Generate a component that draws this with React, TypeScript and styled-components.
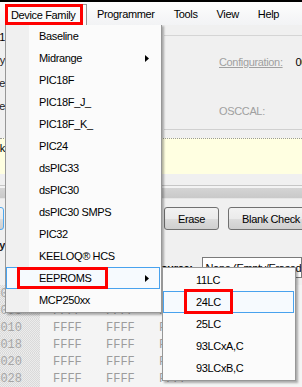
import React from "react";
import styled, { createGlobalStyle } from "styled-components";

const Global = createGlobalStyle`
  html, body { margin: 0; padding: 0; background: #f0f0f0; }
  body { font-family: "Liberation Sans", Arial, sans-serif; }
`;

const Screen = styled.div`
  position: relative;
  width: 302px;
  height: 387px;
  overflow: hidden;
  background: #f0f0f0;
  font-family: "Liberation Sans", Arial, sans-serif;
  font-size: 11px;
  letter-spacing: -0.35px;
  color: #000;
`;

const TopEdge = styled.div`
  height: 2px;
  background: #000;
`;

const MenuBar = styled.div`
  position: relative;
  z-index: 3;
  display: flex;
  align-items: stretch;
  height: 23px;
  padding-left: 5px;
  background: linear-gradient(#fdfdfd, #f2f3f5);
`;

const MenuHeader = styled.div<{ $open?: boolean }>`
  position: relative;
  display: flex;
  align-items: center;
  white-space: nowrap;
  box-sizing: border-box;
  ${(p) =>
    p.$open
      ? `
    margin-top: 2px;
    width: 82px;
    padding-left: 5px;
    border: 1px solid #979797;
    border-bottom: none;
    background: #fbfbfb;
  `
      : `
    padding: 0 9px 0 10px;
  `}
`;

const Annotation = styled.span<{ $l: number; $t: number; $w: number; $h: number }>`
  position: absolute;
  left: ${(p) => p.$l}px;
  top: ${(p) => p.$t}px;
  width: ${(p) => p.$w}px;
  height: ${(p) => p.$h}px;
  box-sizing: border-box;
  border: 3px solid #ff0000;
  pointer-events: none;
`;

const Dropdown = styled.div`
  position: absolute;
  z-index: 2;
  left: 5px;
  top: 24px;
  width: 157px;
  box-sizing: border-box;
  border: 1px solid #979797;
  padding-bottom: 1px;
  background: linear-gradient(to right, #f0f0f0 0 23px, #fbfbfb 23px);
  box-shadow: 2px 2px 2px rgba(0, 0, 0, 0.3);
`;

const SubMenu = styled.div`
  position: absolute;
  z-index: 4;
  left: 162px;
  top: 267px;
  width: 134px;
  box-sizing: border-box;
  border: 1px solid #979797;
  padding: 1px 0;
  background: #fbfbfb;
  box-shadow: 2px 2px 2px rgba(0, 0, 0, 0.3);
`;

const MenuItem = styled.div<{ $hot?: boolean }>`
  position: relative;
  display: flex;
  align-items: center;
  justify-content: space-between;
  height: 22px;
  box-sizing: border-box;
  margin-right: 1px;
  padding: 0 10px 0 32px;
  border: 1px solid ${(p) => (p.$hot ? "#48a2ee" : "transparent")};
  background: ${(p) => (p.$hot ? "#f6fafe" : "transparent")};
  white-space: nowrap;
`;

const Arrow = () => (
  <svg width="4" height="7" viewBox="0 0 4 7">
    <polygon points="0,0 4,3.5 0,7" fill="#000" />
  </svg>
);

const Band = styled.div<{ $mid: number }>`
  display: grid;
  grid-template-columns: 5px ${(p) => p.$mid}px 1fr;
`;

const EdgeStack = styled.div`
  display: grid;
  grid-auto-rows: 23px;
`;

const EdgeText = styled.div<{ $bold?: boolean; $tone?: string }>`
  display: flex;
  justify-content: flex-end;
  align-items: center;
  overflow: hidden;
  white-space: nowrap;
  font-weight: ${(p) => (p.$bold ? 700 : 400)};
  color: ${(p) => p.$tone || "#1a1a1a"};
`;

const InfoBand = styled(Band)`
  height: 105px;
`;

const ConfigGroup = styled.div`
  margin-top: 10px;
  border-top: 1px solid #d5d5d5;
  border-bottom: 1px solid #d0d0d0;
  padding: 19px 0 0 55px;
  display: grid;
  grid-template-rows: 14px 14px;
  row-gap: 35px;
`;

const ConfigRow = styled.div`
  display: flex;
  align-items: center;
  white-space: nowrap;
`;

const Disabled = styled.span<{ $link?: boolean }>`
  color: #a0a0a0;
  text-decoration: ${(p) => (p.$link ? "underline" : "none")};
`;

const Value = styled.span`
  margin-left: 13px;
  color: #000;
`;

const StatusBox = styled(Band)`
  margin-top: 8px;
  height: 36px;
  box-sizing: border-box;
  border-top: 1px dotted #9a9a9a;
  background: #ffffe1;
  align-items: start;
`;

const StatusEdge = styled(EdgeText)`
  height: 14px;
  margin-top: 2px;
`;

const Progress = styled.div`
  margin-top: 11px;
  height: 14px;
  box-sizing: border-box;
  border-top: 1px solid #c6c6c6;
  border-bottom: 1px solid #e6e6e6;
  background: linear-gradient(#f3f3f3 0 2px, #d4d4d4 2px, #c9c9c9);
`;

const ButtonBand = styled(Band)`
  margin-top: 8px;
  height: 23px;
`;

const ButtonGroup = styled.div`
  display: flex;
  gap: 9px;
`;

const Button = styled.button<{ $w: number; $focus?: boolean }>`
  flex: none;
  width: ${(p) => p.$w}px;
  height: 23px;
  box-sizing: border-box;
  padding: 0;
  border: 1px solid ${(p) => (p.$focus ? "#4ea8ef" : "#707070")};
  border-radius: 3px;
  background: linear-gradient(#f2f2f2 0%, #ebebeb 50%, #dddddd 50%, #cfcfcf 100%);
  font-family: inherit;
  font-size: 11px;
  letter-spacing: -0.35px;
  color: #000;
  white-space: nowrap;
`;

const EdgeButtonCell = styled.div`
  display: flex;
  justify-content: flex-end;
  overflow: hidden;
  padding-right: 1px;
`;

const MemoryHeader = styled(Band)`
  margin-top: 8px;
  height: 14px;
`;

const SourceBand = styled(Band)`
  margin-top: 5px;
  height: 21px;
`;

const SourceCell = styled.div`
  grid-column: 2 / 4;
  display: flex;
  align-items: center;
  padding-left: 149px;
  gap: 9px;
  white-space: nowrap;
`;

const Label = styled.span`
  font-weight: 700;
`;

const TextBox = styled.div`
  flex: 1;
  height: 21px;
  box-sizing: border-box;
  border: 1px solid #7a7a7a;
  background: #ffffff;
  padding-left: 3px;
  display: flex;
  align-items: center;
  white-space: nowrap;
  overflow: hidden;
`;

const HexGrid = styled.div`
  margin-top: 7px;
  background: #f4f4f4;
`;

const HexRow = styled.div`
  display: grid;
  grid-template-columns: 40px repeat(3, 53px);
  height: 17px;
  font-family: "Liberation Mono", "Courier New", monospace;
  font-size: 12px;
  letter-spacing: 0;
  color: #9c9c9c;
`;

const AddrCell = styled.div`
  display: flex;
  justify-content: flex-end;
  align-items: center;
  overflow: hidden;
  padding-right: 18px;
  background: repeating-conic-gradient(#ececec 0 25%, #dadada 0 50%) 0 0 / 2px 2px;
  color: #a6a6a6;
`;

const DataCell = styled.div`
  display: flex;
  align-items: center;
  padding-left: 13px;
  white-space: nowrap;
`;

const families = [
  "Baseline",
  "Midrange",
  "PIC18F",
  "PIC18F_J_",
  "PIC18F_K_",
  "PIC24",
  "dsPIC33",
  "dsPIC30",
  "dsPIC30 SMPS",
  "PIC32",
  "KEELOQ® HCS",
  "EEPROMS",
  "MCP250xx",
];

const eeproms = ["11LC", "24LC", "25LC", "93LCxA,C", "93LCxB,C"];

const addresses = ["0000", "0008", "0010", "0018", "0020", "0028"];

export default function App() {
  return (
    <Screen>
      <Global />
      <TopEdge />
      <MenuBar>
        <MenuHeader $open>
          Device Family
          <Annotation $l={-1} $t={-1} $w={78} $h={21} />
        </MenuHeader>
        <MenuHeader>Programmer</MenuHeader>
        <MenuHeader>Tools</MenuHeader>
        <MenuHeader>View</MenuHeader>
        <MenuHeader>Help</MenuHeader>
      </MenuBar>

      <InfoBand $mid={159}>
        <EdgeStack>
          <EdgeText $tone="#000">PIC16F1</EdgeText>
          <EdgeText>Family</EdgeText>
          <EdgeText>Device</EdgeText>
          <EdgeText>Device</EdgeText>
        </EdgeStack>
        <div />
        <ConfigGroup>
          <ConfigRow>
            <Disabled $link>Configuration:</Disabled>
            <Value>0000</Value>
          </ConfigRow>
          <ConfigRow>
            <Disabled>OSCCAL:</Disabled>
          </ConfigRow>
        </ConfigGroup>
      </InfoBand>

      <StatusBox $mid={159}>
        <StatusEdge $tone="#000">PICk</StatusEdge>
      </StatusBox>

      <Progress />

      <ButtonBand $mid={159}>
        <EdgeButtonCell>
          <Button $w={55} $focus>
            Write
          </Button>
        </EdgeButtonCell>
        <div />
        <ButtonGroup>
          <Button $w={55}>Erase</Button>
          <Button $w={86}>Blank Check</Button>
        </ButtonGroup>
      </ButtonBand>

      <MemoryHeader $mid={159}>
        <EdgeText $bold>Hex Only</EdgeText>
      </MemoryHeader>

      <SourceBand $mid={159}>
        <div />
        <SourceCell>
          <Label>Source:</Label>
          <TextBox>None (Empty/Erased)</TextBox>
        </SourceCell>
      </SourceBand>

      <HexGrid>
        {addresses.map((a) => (
          <HexRow key={a}>
            <AddrCell>{a}</AddrCell>
            {[0, 1, 2].map((i) => (
              <DataCell key={i}>FFFF</DataCell>
            ))}
          </HexRow>
        ))}
      </HexGrid>

      <Dropdown>
        {families.map((f) => (
          <MenuItem key={f} $hot={f === "EEPROMS"}>
            <span>{f}</span>
            {(f === "Midrange" || f === "EEPROMS") && <Arrow />}
            {f === "EEPROMS" && <Annotation $l={10} $t={-1} $w={91} $h={22} />}
          </MenuItem>
        ))}
      </Dropdown>

      <SubMenu>
        {eeproms.map((e) => (
          <MenuItem key={e} $hot={e === "24LC"}>
            <span>{e}</span>
            {e === "24LC" && <Annotation $l={20} $t={-3} $w={49} $h={25} />}
          </MenuItem>
        ))}
      </SubMenu>
    </Screen>
  );
}
